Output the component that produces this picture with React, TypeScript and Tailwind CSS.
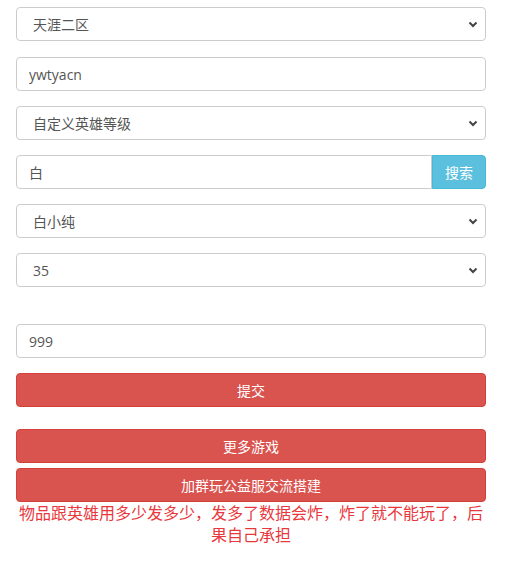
import { useState } from "react";

const FONT = { fontFamily: '"Open Sans", "Noto Sans CJK SC", sans-serif' };

function Chevron() {
  return (
    <svg
      className="pointer-events-none absolute right-[8px] top-1/2 -translate-y-1/2"
      width="10"
      height="8"
      viewBox="0 0 10 8"
    >
      <path d="M1.5 2.5 L5 6 L8.5 2.5" fill="none" stroke="#444" strokeWidth="2" />
    </svg>
  );
}

function Select({ value, options }: { value: string; options: string[] }) {
  const [v, setV] = useState(value);
  return (
    <div className="relative">
      <select
        value={v}
        onChange={(e) => setV(e.target.value)}
        className="block h-[34px] w-full appearance-none rounded-[4px] border border-[#ccc] bg-white pl-[16px] pr-8 text-[14px] text-[#555] outline-none"
        style={FONT}
      >
        {options.map((o) => (
          <option key={o} value={o}>
            {o}
          </option>
        ))}
      </select>
      <Chevron />
    </div>
  );
}

export default function App() {
  const [account, setAccount] = useState("ywtyacn");
  const [keyword, setKeyword] = useState("白");
  const [amount, setAmount] = useState("999");

  return (
    <div className="bg-white px-4 pt-[7px] pb-8" style={FONT}>
      <div className="flex w-[470px] flex-col">
        <Select value="天涯二区" options={["天涯一区", "天涯二区", "天涯三区"]} />

        <input
          value={account}
          onChange={(e) => setAccount(e.target.value)}
          className="mt-[16px] block h-[34px] w-full rounded-[4px] border border-[#ccc] px-3 text-[14px] text-[#555] outline-none"
        />

        <div className="mt-[15px]">
          <Select value="自定义英雄等级" options={["自定义英雄等级"]} />
        </div>

        {/* Search group */}
        <div className="mt-[15px] flex h-[34px]">
          <input
            value={keyword}
            onChange={(e) => setKeyword(e.target.value)}
            className="block h-full flex-1 rounded-l-[4px] border border-[#ccc] px-3 text-[14px] text-[#555] outline-none"
          />
          <button className="h-full w-[54px] rounded-r-[4px] border border-[#46b8da] bg-[#5bc0de] text-[14px] text-white">
            搜索
          </button>
        </div>

        <div className="mt-[15px]">
          <Select value="白小纯" options={["白小纯"]} />
        </div>

        <div className="mt-[15px]">
          <Select value="35" options={["1", "35", "99"]} />
        </div>

        <input
          value={amount}
          onChange={(e) => setAmount(e.target.value)}
          className="mt-[37px] block h-[34px] w-full rounded-[4px] border border-[#ccc] px-3 text-[14px] text-[#555] outline-none"
        />

        <button className="mt-[15px] h-[34px] w-full rounded-[4px] border border-[#d43f3a] bg-[#d9534f] text-[14px] text-white">
          提交
        </button>

        <button className="mt-[22px] h-[34px] w-full rounded-[4px] border border-[#d43f3a] bg-[#d9534f] text-[14px] text-white">
          更多游戏
        </button>
        <button className="mt-[5px] h-[34px] w-full rounded-[4px] border border-[#d43f3a] bg-[#d9534f] text-[14px] text-white">
          加群玩公益服交流搭建
        </button>

        <p className="text-center text-[16px] leading-[22px] text-[#e8383d]">
          物品跟英雄用多少发多少，发多了数据会炸，炸了就不能玩了，后果自己承担
        </p>
      </div>
    </div>
  );
}
